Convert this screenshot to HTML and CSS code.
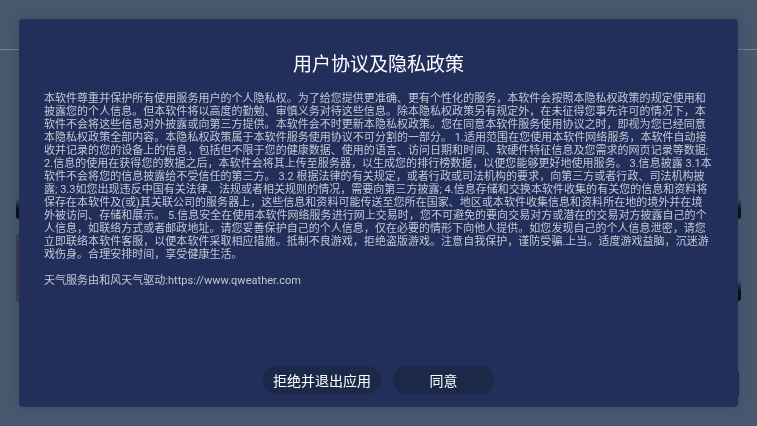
FILE: index.html
```html
<!DOCTYPE html>
<html lang="zh">
<head>
<meta charset="utf-8">
<title>用户协议及隐私政策</title>
<link rel="stylesheet" href="styles.css">
</head>
<body>
<div class="app">
  <header class="appbar"></header>
  <span class="peek peek-l1"></span>
  <span class="peek peek-l2"></span>
  <span class="peek peek-r1"></span>
  <span class="peek peek-r2"></span>
  <span class="peek peek-r3"></span>
</div>
<div class="overlay">
  <section class="dialog">
    <h1 class="title">用户协议及隐私政策</h1>
    <div class="body">
      <p class="para">本软件尊重并保护所有使用服务用户的个人隐私权。为了给您提供更准确、更有个性化的服务，本软件会按照本隐私权政策的规定使用和披露您的个人信息。但本软件将以高度的勤勉、审慎义务对待这些信息。除本隐私权政策另有规定外，在未征得您事先许可的情况下，本软件不会将这些信息对外披露或向第三方提供。本软件会不时更新本隐私权政策。您在同意本软件服务使用协议之时，即视为您已经同意本隐私权政策全部内容。本隐私权政策属于本软件服务使用协议不可分割的一部分。 1.适用范围在您使用本软件网络服务，本软件自动接收并记录的您的设备上的信息，包括但不限于您的健康数据、使用的语言、访问日期和时间、软硬件特征信息及您需求的网页记录等数据; 2.信息的使用在获得您的数据之后，本软件会将其上传至服务器，以生成您的排行榜数据，以便您能够更好地使用服务。 3.信息披露 3.1本软件不会将您的信息披露给不受信任的第三方。 3.2 根据法律的有关规定，或者行政或司法机构的要求，向第三方或者行政、司法机构披露; 3.3如您出现违反中国有关法律、法规或者相关规则的情况，需要向第三方披露; 4.信息存储和交换本软件收集的有关您的信息和资料将保存在本软件及(或)其关联公司的服务器上，这些信息和资料可能传送至您所在国家、地区或本软件收集信息和资料所在地的境外并在境<br>外被访问、存储和展示。 5.信息安全在使用本软件网络服务进行网上交易时，您不可避免的要向交易对方或潜在的交易对方披露自己的个人信息，如联络方式或者邮政地址。请您妥善保护自己的个人信息，仅在必要的情形下向他人提供。如您发现自己的个人信息泄密，请您立即联络本软件客服，以便本软件采取相应措施。抵制不良游戏，拒绝盗版游戏。注意自我保护，谨防受骗.上当。适度游戏益脑，沉迷游戏伤身。合理安排时间，享受健康生活。</p>
      <p class="para credit">天气服务由和风天气驱动:https://www.qweather.com</p>
    </div>
    <div class="actions">
      <button class="btn btn-reject">拒绝并退出应用</button>
      <button class="btn btn-agree">同意</button>
    </div>
  </section>
</div>
</body>
</html>
```
FILE: styles.css
```css
* { box-sizing: border-box; }
html, body { margin: 0; height: 100%; overflow: hidden; }
body {
  font-family: Roboto, "Noto Sans CJK SC", sans-serif;
  background: #46596f;
  color: #fff;
}
.app { height: 100%; position: relative; }
.appbar { height: 50px; border-bottom: 1px solid #75869a; }
.peek { position: absolute; width: 3px; }
.peek-l1 { left: 16px; top: 198px; height: 21px; background: linear-gradient(to bottom, rgba(10, 13, 20, 0), #0a0d14 55%); border-radius: 0 0 0 3px; }
.peek-l2 { left: 16px; top: 234px; height: 68px; background: #3e4059; border-radius: 3px 0 0 3px; }
.peek-r1 { left: 738px; top: 198px; height: 21px; background: linear-gradient(to bottom, rgba(10, 13, 20, 0), #0a0d14 55%); border-radius: 0 0 3px 0; }
.peek-r2 { left: 738px; top: 280px; height: 21px; background: linear-gradient(to bottom, rgba(10, 13, 20, 0), #0a0d14 55%); border-radius: 0 0 3px 0; }
.peek-r3 { left: 738px; top: 372px; height: 25px; width: 1px; background: #1c2840; }
.overlay {
  position: fixed;
  inset: 0;
  padding: 19px;
}
.dialog {
  height: 388px;
  background: #222f5b;
  border-radius: 4px;
  box-shadow: 0 0 14px rgba(30, 40, 60, 0.28);
  padding: 32px 25px 13px;
  display: flex;
  flex-direction: column;
}
.title {
  margin: 0;
  font-size: 19px;
  font-weight: 400;
  line-height: 27px;
  text-align: center;
}
.body { flex: 1; padding-top: 14px; }
.para {
  margin: 0 -1px 0 0;
  font-size: 11px;
  line-height: 13px;
  letter-spacing: 0.03px;
  color: #c3c8d5;
}
.credit { margin-top: 13px; }
.actions {
  display: flex;
  justify-content: center;
  gap: 12px;
}
.btn {
  height: 28px;
  border: 0;
  border-radius: 14px;
  background: #1c2848;
  color: #fff;
  font: inherit;
  font-size: 14px;
  padding: 0;
}
.btn-reject { width: 118px; }
.btn-agree { width: 101px; }
```
